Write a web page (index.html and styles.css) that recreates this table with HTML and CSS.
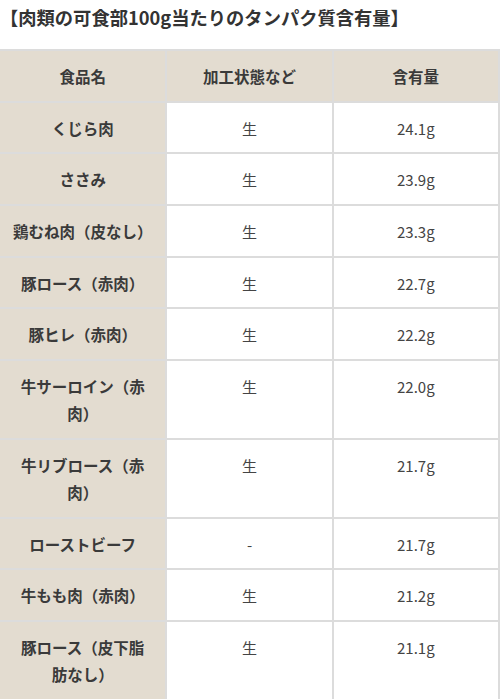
FILE: index.html
```html
<!DOCTYPE html>
<html lang="ja">
<head>
<meta charset="utf-8">
<link rel="stylesheet" href="styles.css">
</head>
<body>
<p class="title">【肉類の可食部100g当たりのタンパク質含有量】</p>
<table class="protein">
<thead>
<tr><th>食品名</th><th>加工状態など</th><th>含有量</th></tr>
</thead>
<tbody>
<tr><th>くじら肉</th><td>生</td><td>24.1g</td></tr>
<tr><th>ささみ</th><td>生</td><td>23.9g</td></tr>
<tr><th>鶏むね肉（皮なし）</th><td>生</td><td>23.3g</td></tr>
<tr><th>豚ロース（赤肉）</th><td>生</td><td>22.7g</td></tr>
<tr><th>豚ヒレ（赤肉）</th><td>生</td><td>22.2g</td></tr>
<tr><th>牛サーロイン（赤肉）</th><td>生</td><td>22.0g</td></tr>
<tr><th>牛リブロース（赤肉）</th><td>生</td><td>21.7g</td></tr>
<tr><th>ローストビーフ</th><td>-</td><td>21.7g</td></tr>
<tr><th>牛もも肉（赤肉）</th><td>生</td><td>21.2g</td></tr>
<tr><th>豚ロース（皮下脂<br>肪なし）</th><td>生</td><td>21.1g</td></tr>
</tbody>
</table>
</body>
</html>
```
FILE: styles.css
```css
html, body {
  margin: 0;
  padding: 0;
  background: #ffffff;
}
body {
  font-family: "Noto Sans CJK JP", "Noto Sans", sans-serif;
  color: #333333;
}
.title {
  margin: 0;
  padding: 4px 0 0 0;
  font-size: 18.3px;
  line-height: 26px;
  font-weight: 700;
  color: #333333;
}
.protein {
  margin-top: 19px;
  width: 500px;
  border-collapse: collapse;
  table-layout: fixed;
}
.protein th,
.protein td {
  border: 2px solid #dcdcdc;
  padding: 12px 10px 10.7px;
  font-size: 15px;
  line-height: 27px;
  text-align: center;
  vertical-align: top;
  color: #444444;
}
.protein th {
  background: #e3dcd0;
  font-weight: 700;
  font-size: 15.5px;
  color: #3a3a3a;
}
.protein td {
  background: #ffffff;
  font-weight: 400;
}
.protein tr > :first-child {
  border-left: none;
}
```
